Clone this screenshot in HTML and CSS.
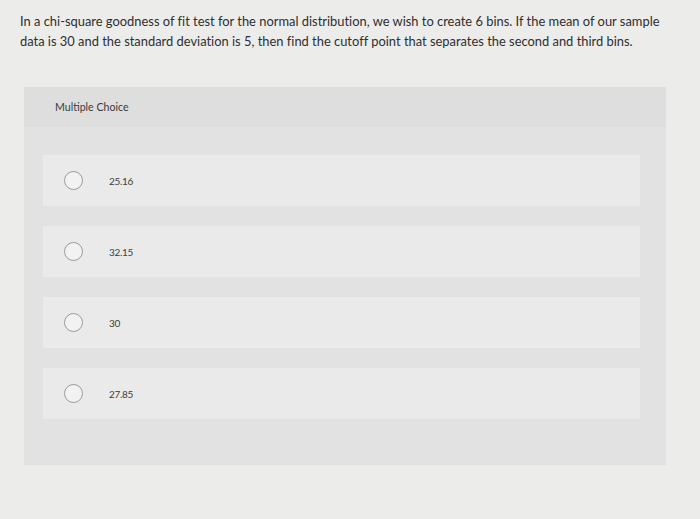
FILE: index.html
```html
<!DOCTYPE html>
<html>
<head>
<meta charset="utf-8">
<link rel="stylesheet" href="styles.css">
</head>
<body>
<div class="page">
  <p class="question">In a chi-square goodness of fit test for the normal distribution, we wish to create 6 bins. If the mean of our sample data is 30 and the standard deviation is 5, then find the cutoff point that separates the second and third bins.</p>
  <div class="panel">
    <div class="panel-head">Multiple Choice</div>
    <div class="options">
      <div class="option"><span class="radio"></span><span class="label">25.16</span></div>
      <div class="option"><span class="radio"></span><span class="label">32.15</span></div>
      <div class="option"><span class="radio"></span><span class="label">30</span></div>
      <div class="option"><span class="radio"></span><span class="label">27.85</span></div>
    </div>
  </div>
</div>
</body>
</html>
```
FILE: styles.css
```css
html, body {
  margin: 0;
  padding: 0;
}
body {
  background: #ececeb;
  width: 700px;
  height: 519px;
  overflow: hidden;
  font-family: Lato, "Open Sans", sans-serif;
  color: #333;
}
.page {
  padding: 11px 30px 0 20px;
}
.question {
  margin: 0;
  font-size: 12.9px;
  line-height: 20px;
  color: #2f2f2f;
  font-variant-ligatures: none;
}
.panel {
  margin: 36px 0 0 4px;
  width: 642px;
  background: #e2e2e2;
  padding-bottom: 46px;
}
.panel-head {
  height: 40px;
  display: flex;
  align-items: center;
  padding-left: 31px;
  font-size: 10.6px;
  color: #3a3a3a;
  background: #dedede;
}
.options {
  display: flex;
  flex-direction: column;
  gap: 20px;
  padding: 28px 26px 0 19px;
}
.option {
  height: 51px;
  background: #eaeaea;
  display: flex;
  align-items: center;
  padding-left: 21px;
}
.radio {
  width: 17px;
  height: 17px;
  border: 1.6px solid #9a9a9a;
  border-radius: 50%;
  background: #f2f2f2;
  flex: none;
}
.label {
  margin-left: 26px;
  font-size: 10px;
  letter-spacing: -0.3px;
  color: #404040;
}
```
